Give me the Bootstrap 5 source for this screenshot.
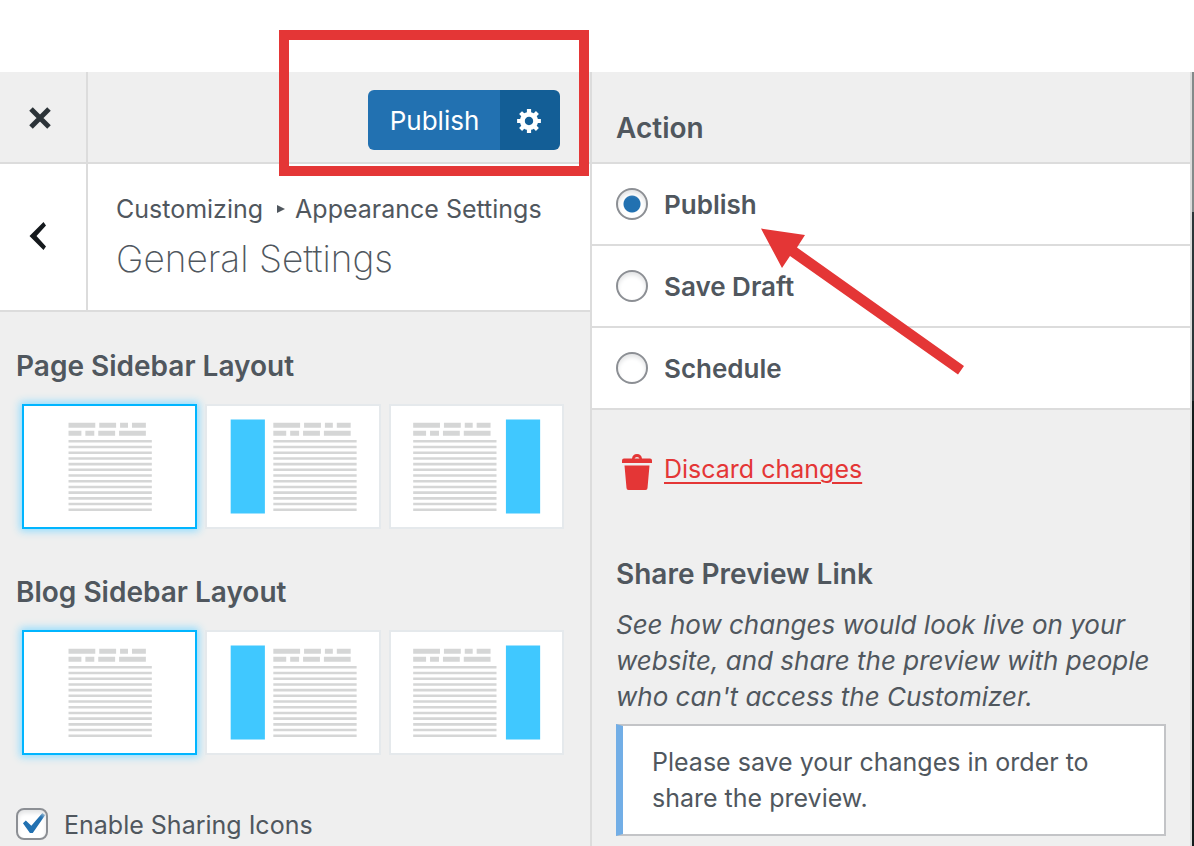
<!DOCTYPE html>
<html lang="en">
<head>
<meta charset="utf-8">
<meta name="viewport" content="width=device-width, initial-scale=1">
<title>Customizing: General Settings</title>
<link href="https://cdn.jsdelivr.net/npm/bootstrap@5.3.0/dist/css/bootstrap.min.css" rel="stylesheet">
<style>
  body { font-family: Inter, "Liberation Sans", sans-serif; font-size: 25px; line-height: 36px; color: #50575e; background: #fff; }
  .customizer { display: grid; grid-template-columns: 592fr 600fr 2px; min-height: 100vh; padding-top: 72px; }
  .pane { background: #efefef; border-right: 2px solid #dcdcdc; min-width: 0; }
  .bar { height: 92px; border-bottom: 2px solid #dcdcdc; }
  .side-btn { width: 88px; border: 0; border-right: 2px solid #dcdcdc; background: transparent; padding: 0 7px 2px 0; color: #2c3338; }
  .crumbs { height: 148px; background: #fff; border-bottom: 2px solid #dcdcdc; }
  .crumbs .side-btn { padding: 0 10px 6px 0; }
  .crumb-text { padding: 27px 0 0 28px; }
  .crumb-text .arrow-sep { width: 8px; height: 8px; margin: 0 10px 0 14px; }
  .panel-title { font-size: 37px; font-weight: 200; line-height: 48px; margin: 8px 0 0; }
  .heading { font-size: 28px; font-weight: 600; line-height: 36px; margin: 0; }
  .publish-group { height: 60px; margin: 18px 30px 0 0; }
  .publish-group .btn { border: 0; border-radius: 6px; font-size: 26px; line-height: 36px; color: #fff; background: #2271b1; padding: 2px 0 0; width: 133px; }
  .publish-group .gear { background: #135e96; width: 60px; flex: none; padding: 0 2px 2px 0; }
  .frame-mark { position: absolute; top: -42px; right: 1px; width: 310px; height: 146px; border: 10px solid #e43636; pointer-events: none; }
  .controls { padding: 36px 16px 0; }
  .tiles { display: grid; grid-template-columns: repeat(3, 1fr); gap: 8px; margin: 20px 10px 0 6px; }
  .tile { display: block; height: 125px; background: #fff; border: 2px solid #e5e9ec; }
  .btn-check:checked + .tile { border-color: #00b5ff; box-shadow: 0 0 8px 2px #8edcff; }
  .tile svg { display: block; width: 100%; height: 100%; }
  .layout-group + .layout-group { margin-top: 45px; }
  .choice-row { height: 82px; background: #fff; border-bottom: 2px solid #dcdcdc; padding: 0 24px; font-size: 26px; font-weight: 600; }
  .choice-row label, .sharing-row label { padding-top: 2px; }
  .choice-box { flex: none; width: 32px; height: 32px; margin: 0; border: 2px solid #8c8f94; box-shadow: inset 0 3px 4px #e3e4e5; background-color: #fff; }
  .choice-box:checked { background-color: #fff; border-color: #8c8f94; }
  .choice-box[type=radio]:checked { background-image: radial-gradient(circle, #2271b1 8px, transparent 9px); background-size: 100% 100%; }
  .choice-box[type=checkbox] { border-radius: 8px; }
  .choice-box[type=checkbox]:checked { background-image: url("data:image/svg+xml,%3Csvg xmlns='http://www.w3.org/2000/svg' viewBox='3 3 14 14'%3E%3Cpath d='M14.83 4.89l1.34.94-5.81 8.38H9.02L5.78 9.67l1.34-1.25 2.57 2.4z' fill='%232271b1'/%3E%3C/svg%3E"); background-size: 30px 30px; }
  .sharing-row { margin-top: 50px; }
  .action-head { padding: 38px 24px 0; }
  .pointer-arrow { position: absolute; left: 168px; top: 64px; width: 206px; height: 148px; pointer-events: none; }
  .drawer { padding: 38px 24px 10px; }
  .trash { margin: 6px 12px 0 6px; }
  .discard { color: #e43636; text-decoration-thickness: 2px; text-underline-offset: 4px; }
  .discard:hover { color: #b32d2e; }
  .share-title { margin-top: 66px; }
  .share-hint { font-size: 26px; margin: 15px 0 0; }
  .notice-box { background: #fff; border: 2px solid #c3c4c7; border-left: 7px solid #72aee6; padding: 18px 28px 18px 29px; margin: 9px 0 0; }
  .site-edge { background: linear-gradient(#838a8a 140px, #2c3538 140px 329px, #141b1b 329px); }
</style>
</head>
<body>
<svg class="d-none" aria-hidden="true">
  <defs>
    <g id="copy" fill="#d5d6d6">
      <path d="M0 0h27v5H0zM31 0h17v5H31zM52 0h8v5h-8zM64 0h14v5H64zM0 8h13v5H0zM17 8h9v5h-9zM30 8h17v5H30zM51 8h27v5H51z"/>
      <path d="M0 18.6h84M0 24.35h84M0 30.1h84M0 35.85h84M0 41.6h84M0 47.35h84M0 53.1h84M0 58.85h84M0 64.6h84M0 70.35h84M0 76.1h84M0 81.85h84M0 87.6h84" stroke="#d5d6d6" stroke-width="2.6"/>
    </g>
    <g id="lay-none"><use href="#copy" x="44.5" y="17"/></g>
    <g id="lay-left"><path d="M23.500 13.500h34.500v95H23.500z" fill="#40c8ff"/><use href="#copy" x="66.500" y="17"/></g>
    <g id="lay-right"><use href="#copy" x="22" y="17"/><path d="M115.500 13.500h34.500v95H115.500z" fill="#40c8ff"/></g>
  </defs>
</svg>

<div class="customizer">
  <section class="pane" aria-label="Customizer">
    <header class="bar position-relative d-flex">
      <button class="side-btn" type="button" aria-label="Close">
        <svg width="24" height="24" viewBox="0 0 24 24"><path d="M3 3l18 18M21 3L3 21" stroke="currentColor" stroke-width="5"/></svg>
      </button>
      <div class="publish-group btn-group ms-auto">
        <button class="btn" type="button">Publish</button>
        <button class="btn gear" type="button" aria-label="Publish settings">
          <svg width="28" height="28" viewBox="-.5 .5 20 20" fill="#fff"><path d="M18 12h-2.180c-.17.7-.44 1.350-.81 1.930l1.540 1.540-2.100 2.100-1.540-1.540c-.58.36-1.230.63-1.910.79V19H8v-2.180c-.68-.16-1.330-.43-1.910-.79l-1.540 1.540-2.120-2.120 1.540-1.540c-.36-.58-.63-1.230-.79-1.910H1V9.030h2.170c.16-.7.44-1.350.8-1.940L2.430 5.550l2.100-2.100 1.540 1.540c.58-.37 1.240-.64 1.930-.81V2h3v2.180c.68.16 1.330.43 1.910.79l1.540-1.540 2.120 2.120-1.540 1.540c.36.59.64 1.240.8 1.940H18V12zm-8.500 1.500c1.660 0 3-1.340 3-3s-1.340-3-3-3-3 1.340-3 3 1.340 3 3 3z"/></svg>
        </button>
      </div>
      <div class="frame-mark"></div>
    </header>

    <div class="crumbs d-flex">
      <button class="side-btn" type="button" aria-label="Back">
        <svg width="18" height="28" viewBox="0 0 18 28"><path d="M14.500 0L17 3.500 7.500 14 17 24.500 14.500 28 .5 14z" fill="#15191d"/></svg>
      </button>
      <div class="crumb-text text-nowrap">
        <div class="d-flex align-items-center">Customizing<svg class="arrow-sep" viewBox="0 0 8 8"><path d="M0 0l8 4-8 4z" fill="#50575e"/></svg>Appearance Settings</div>
        <h1 class="panel-title">General Settings</h1>
      </div>
    </div>

    <form class="controls">
      <div class="layout-group" role="radiogroup" aria-labelledby="page-layout">
        <h2 class="heading" id="page-layout">Page Sidebar Layout</h2>
        <div class="tiles">
          <div><input class="btn-check" type="radio" name="page" id="page-none" checked><label class="tile" for="page-none" aria-label="No sidebar"><svg viewBox="0 0 172 122"><use href="#lay-none"/></svg></label></div>
          <div><input class="btn-check" type="radio" name="page" id="page-left"><label class="tile" for="page-left" aria-label="Left sidebar"><svg viewBox="0 0 172 122"><use href="#lay-left"/></svg></label></div>
          <div><input class="btn-check" type="radio" name="page" id="page-right"><label class="tile" for="page-right" aria-label="Right sidebar"><svg viewBox="0 0 172 122"><use href="#lay-right"/></svg></label></div>
        </div>
      </div>
      <div class="layout-group" role="radiogroup" aria-labelledby="blog-layout">
        <h2 class="heading" id="blog-layout">Blog Sidebar Layout</h2>
        <div class="tiles">
          <div><input class="btn-check" type="radio" name="blog" id="blog-none" checked><label class="tile" for="blog-none" aria-label="No sidebar"><svg viewBox="0 0 172 122"><use href="#lay-none"/></svg></label></div>
          <div><input class="btn-check" type="radio" name="blog" id="blog-left"><label class="tile" for="blog-left" aria-label="Left sidebar"><svg viewBox="0 0 172 122"><use href="#lay-left"/></svg></label></div>
          <div><input class="btn-check" type="radio" name="blog" id="blog-right"><label class="tile" for="blog-right" aria-label="Right sidebar"><svg viewBox="0 0 172 122"><use href="#lay-right"/></svg></label></div>
        </div>
      </div>
      <div class="sharing-row d-flex align-items-center gap-3">
        <input class="form-check-input choice-box" type="checkbox" id="sharing" checked>
        <label for="sharing">Enable Sharing Icons</label>
      </div>
    </form>
  </section>

  <section class="pane" aria-label="Publish settings">
    <div class="bar action-head"><h2 class="heading">Action</h2></div>
    <div class="position-relative">
      <div class="choice-row d-flex align-items-center gap-3">
        <input class="form-check-input choice-box" type="radio" name="action" id="act-publish" checked><label for="act-publish">Publish</label>
      </div>
      <div class="choice-row d-flex align-items-center gap-3">
        <input class="form-check-input choice-box" type="radio" name="action" id="act-draft"><label for="act-draft">Save Draft</label>
      </div>
      <div class="choice-row d-flex align-items-center gap-3">
        <input class="form-check-input choice-box" type="radio" name="action" id="act-schedule"><label for="act-schedule">Schedule</label>
      </div>
      <svg class="pointer-arrow" viewBox="0 0 206 148" aria-hidden="true"><path d="M1 .5L45 7l-8 12.500L204 138l-6 8.500L30 28l-8 12z" fill="#e43636"/></svg>
    </div>
    <div class="drawer">
      <div class="d-flex align-items-center">
        <svg class="trash" width="30" height="36" viewBox="0 0 30 36" fill="#e43636" aria-hidden="true"><path d="M2 4.500h8C10.500 1.500 12 0 15 0s4.500 1.500 5 4.500h8q2 0 2 2V9H0V6.500q0-2 2-2zM12.500 4.500h5Q17 3 15 3t-2.500 1.500z"/><path d="M2.500 11.500h25l-2 22.500q0 2-2 2h-17q-2 0-2-2z"/></svg>
        <a class="discard" href="#">Discard changes</a>
      </div>
      <h2 class="heading share-title">Share Preview Link</h2>
      <p class="share-hint fst-italic">See how changes would look live on your website, and share the preview with people who can't access the Customizer.</p>
      <p class="notice-box">Please save your changes in order to share the preview.</p>
    </div>
  </section>
  <div class="site-edge"></div>
</div>
<script src="https://cdn.jsdelivr.net/npm/bootstrap@5.3.0/dist/js/bootstrap.bundle.min.js"></script>
</body>
</html>
